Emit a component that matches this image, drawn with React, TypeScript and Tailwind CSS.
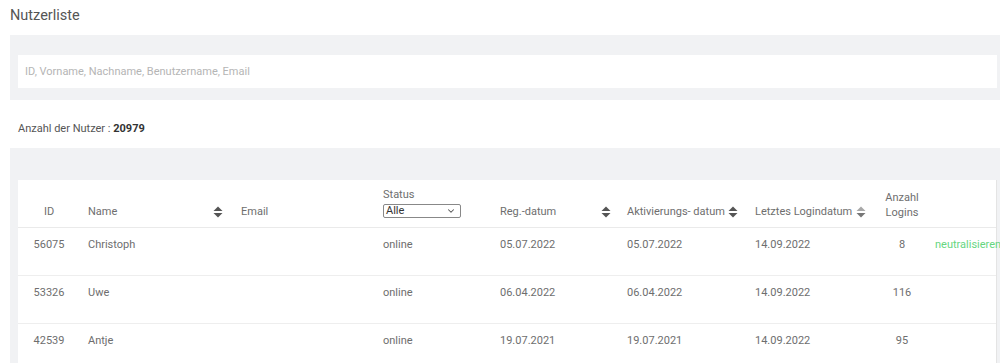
import { ChevronDown } from "lucide-react";

interface UserRow {
  id: number;
  name: string;
  email: string;
  status: string;
  regDate: string;
  activationDate: string;
  lastLogin: string;
  logins: number;
  action?: string;
}

const USERS: UserRow[] = [
  { id: 56075, name: "Christoph", email: "", status: "online", regDate: "05.07.2022", activationDate: "05.07.2022", lastLogin: "14.09.2022", logins: 8, action: "neutralisieren" },
  { id: 53326, name: "Uwe", email: "", status: "online", regDate: "06.04.2022", activationDate: "06.04.2022", lastLogin: "14.09.2022", logins: 116 },
  { id: 42539, name: "Antje", email: "", status: "online", regDate: "19.07.2021", activationDate: "19.07.2021", lastLogin: "14.09.2022", logins: 95 },
];

function SortIcon({ faded = false }: { faded?: boolean }) {
  return (
    <svg width="10" height="12" viewBox="0 0 10 12" className="shrink-0">
      <path d="M5 0.5 L9.5 5 L0.5 5 Z" fill={faded ? "#a8a8a8" : "#555"} />
      <path d="M5 11.5 L9.5 7 L0.5 7 Z" fill={faded ? "#777" : "#555"} />
    </svg>
  );
}

export default function App() {
  return (
    <div className="w-[1000px] h-[363px] overflow-hidden bg-white text-[#6e6e6e] font-['Roboto',sans-serif]">
      <h1 className="pl-[10px] pt-[6px] h-[35px] text-[14.5px] leading-[20px] text-[#555]">Nutzerliste</h1>

      <div className="ml-[10px] bg-[#f1f2f4] pl-[8px] pr-[3px] pt-[20px] pb-[12px]">
        <input
          type="text"
          placeholder="ID, Vorname, Nachname, Benutzername, Email"
          className="w-full h-[33px] bg-white px-[7px] text-[11px] text-[#666] placeholder:text-[#b5b5b5] outline-none"
        />
      </div>

      <div className="pl-[18px] pt-[21px] h-[48px] text-[11px] text-[#555]">
        Anzahl der Nutzer : <span className="font-bold text-[#333]">20979</span>
      </div>

      <div className="ml-[10px] bg-[#f1f2f4] pl-[8px] pr-[3px] pt-[32px] h-[215px]">
        <div className="bg-white border-r border-[#e4e4e4] h-full">
          <table className="table-fixed w-[978px] text-[11px] border-collapse">
            <colgroup>
              <col className="w-[62px]" />
              <col className="w-[153px]" />
              <col className="w-[142px]" />
              <col className="w-[117px]" />
              <col className="w-[127px]" />
              <col className="w-[128px]" />
              <col className="w-[125px]" />
              <col className="w-[60px]" />
              <col className="w-[64px]" />
            </colgroup>
            <thead>
              <tr className="h-[47px] border-b border-[#eaeaea] text-left align-bottom font-normal">
                <th className="font-normal text-center pb-[6px]">ID</th>
                <th className="font-normal pl-[8px] pr-[10px] pb-[6px]">
                  <div className="flex items-center justify-between">
                    <span>Name</span>
                    <SortIcon />
                  </div>
                </th>
                <th className="font-normal pl-[8px] pb-[6px]">Email</th>
                <th className="font-normal pl-[8px] pb-[9px]">
                  <div className="leading-[14px]">Status</div>
                  <div className="mt-[2px] w-[78px] h-[14px] border border-[#888] rounded-[2px] flex items-center justify-between pl-[2px] pr-[4px] text-[#333] leading-none">
                    <span>Alle</span>
                    <ChevronDown className="w-[10px] h-[10px] text-[#555]" strokeWidth={2.5} />
                  </div>
                </th>
                <th className="font-normal pl-[8px] pr-[8px] pb-[6px]">
                  <div className="flex items-center justify-between">
                    <span>Reg.-datum</span>
                    <SortIcon />
                  </div>
                </th>
                <th className="font-normal pl-[8px] pr-[9px] pb-[6px]">
                  <div className="flex items-center justify-between">
                    <span>Aktivierungs- datum</span>
                    <SortIcon />
                  </div>
                </th>
                <th className="font-normal pl-[8px] pr-[6px] pb-[6px]">
                  <div className="flex items-center justify-between">
                    <span>Letztes Logindatum</span>
                    <SortIcon faded />
                  </div>
                </th>
                <th className="font-normal text-center pb-[7px] leading-[15px]">
                  Anzahl
                  <br />
                  Logins
                </th>
                <th className="font-normal pb-[6px]"></th>
              </tr>
            </thead>
            <tbody>
              {USERS.map((u) => (
                <tr key={u.id} className="h-[48px] border-b border-[#eeeeee] align-top">
                  <td className="text-center pt-[9px]">{u.id}</td>
                  <td className="pl-[8px] pt-[9px]">{u.name}</td>
                  <td className="pl-[8px] pt-[9px]">{u.email}</td>
                  <td className="pl-[8px] pt-[9px]">{u.status}</td>
                  <td className="pl-[8px] pt-[9px]">{u.regDate}</td>
                  <td className="pl-[8px] pt-[9px]">{u.activationDate}</td>
                  <td className="pl-[8px] pt-[9px]">{u.lastLogin}</td>
                  <td className="text-center pt-[9px]">{u.logins}</td>
                  <td className="pl-[3px] pt-[9px] whitespace-nowrap text-[#66d67f]">{u.action}</td>
                </tr>
              ))}
            </tbody>
          </table>
        </div>
      </div>
    </div>
  );
}
